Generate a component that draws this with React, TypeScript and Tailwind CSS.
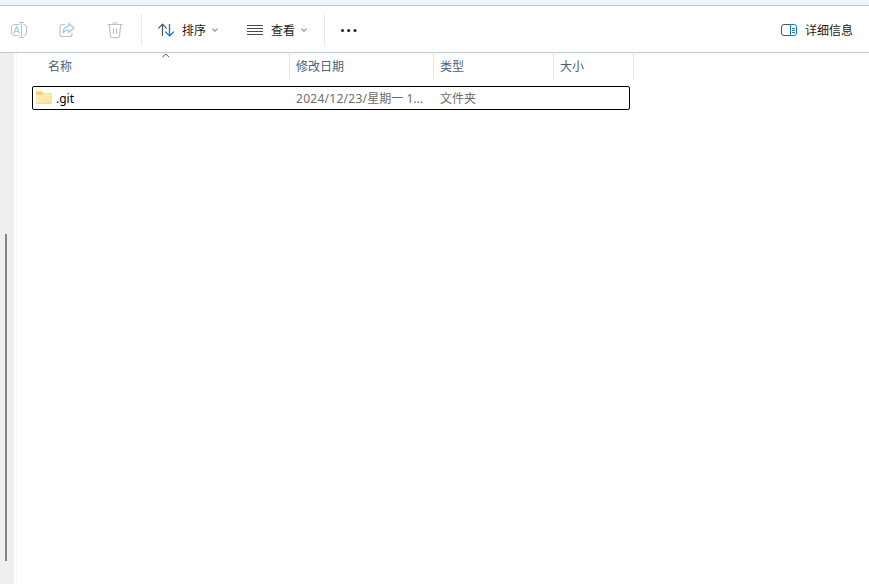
import type { ReactNode } from "react";

function RenameIcon() {
  return (
    <svg width="18" height="18" viewBox="0 0 18 18" fill="none">
      <path d="M9.500 3.500H4A2.500 2.500 0 0 0 1.500 6v6A2.500 2.500 0 0 0 4 14.500H9.500M13.500 3.500H14A2.500 2.500 0 0 1 16.500 6V12A2.500 2.500 0 0 1 14 14.500H13.500" stroke="#c3c3c3" />
      <path d="M3.700 12.500 6.500 5.500l2.800 7M4.700 10.500H8.400" stroke="#a0caec" strokeWidth="1.200" />
      <path d="M9 1.500h5M9 16.500h5M11.500 1.500V16.500" stroke="#a0caec" />
    </svg>
  );
}

function ShareIcon() {
  return (
    <svg width="18" height="18" viewBox="0 0 18 18" fill="none" strokeLinejoin="round">
      <path d="M7 3.500H4.500a2.500 2.500 0 0 0-2.500 2.500v7A2.500 2.500 0 0 0 4.500 15.500h7.500a2 2 0 0 0 2-2v-1.500" stroke="#c3c3c3" strokeWidth="1.200" />
      <path d="M10.800 2.500 15.900 7l-5.100 4.500V9C8.200 8.800 6.400 9.900 5 11.800c.2-4 2.200-6.400 5.800-6.700Z" stroke="#a0caec" strokeWidth="1.200" />
    </svg>
  );
}

function TrashIcon() {
  return (
    <svg width="18" height="18" viewBox="0 0 18 18" fill="none" stroke="#c0c0c0" strokeWidth="1.150" strokeLinecap="round">
      <path d="M2 3.500H16M7 3.500a2 2 0 0 1 4 0M3.300 3.800l1.200 11.200a1.600 1.600 0 0 0 1.600 1.500h5.800a1.600 1.600 0 0 0 1.600-1.500L14.700 3.800M7.500 7.500v5M10.500 7.500v5" />
    </svg>
  );
}

function SortIcon() {
  return (
    <svg width="18" height="16" viewBox="0 0 18 16" fill="none" strokeWidth="1.200" strokeLinecap="round" strokeLinejoin="round">
      <path d="M4.500 13.500V2.300M.700 6.200 4.500 2.200 8.300 6.200" stroke="#555" />
      <path d="M11.500 2.300v11.400M7.700 10l3.800 3.900 4-3.900" stroke="#0f7ddb" strokeWidth="1.350" />
    </svg>
  );
}

function LinesIcon() {
  return (
    <svg width="16" height="12" viewBox="0 0 16 12" stroke="#4b4b4b">
      <path d="M0 1.500h16M0 4.500h16M0 7.500h16M0 10.500h16" />
    </svg>
  );
}

function DetailsIcon() {
  return (
    <svg width="16" height="12" viewBox="0 0 16 12" fill="none">
      <path d="M9.500.500H3A2.500 2.500 0 0 0 .500 3v6A2.500 2.500 0 0 0 3 11.500h6.500" stroke="#555" />
      <path d="M9.500.500H13A2.500 2.500 0 0 1 15.500 3v6a2.500 2.500 0 0 1-2.500 2.500H9.500ZM11 4.500h3M11 6.500h3M11 8.500h3" stroke="#0f7ddb" />
    </svg>
  );
}

function Chevron() {
  return (
    <svg width="6" height="4" viewBox="0 0 6 4" fill="none" stroke="#8f8f8f" strokeWidth="1.150">
      <path d="m.4.600 2.600 2.500L5.600.600" />
    </svg>
  );
}

function FolderIcon() {
  return (
    <svg width="16" height="14" viewBox="0 0 16 14">
      <defs>
        <linearGradient id="folder" x1="0" y1="0" x2="1" y2="1">
          <stop stopColor="#fff0c3" />
          <stop offset="1" stopColor="#ffe092" />
        </linearGradient>
      </defs>
      <path d="M0 1.200Q0 .200 1 .200H5.500L7.500 2H15q1 0 1 1V7H0Z" fill="#f6cf75" />
      <path d="M0 4.500Q0 4 1 4H6L7.800 2.300H15q1 0 1 1V12q0 1-1 1H1q-1 0-1-1Z" fill="url(#folder)" />
      <path d="M.500 12.500q.2.500.8.500h13.400q.6 0 .8-.500Z" fill="#efcb77" />
    </svg>
  );
}

function Divider({ className }: { className: string }) {
  return <div className={`h-8 w-px shrink-0 bg-[#e9e9e9] ${className}`} />;
}

function Heading({ className, children }: { className: string; children: ReactNode }) {
  return <div className={`h-[27px] shrink-0 border-r border-[#e5e5e5] pt-[6px] ${className}`}>{children}</div>;
}

export default function App() {
  return (
    <div className="flex h-[584px] w-[869px] flex-col overflow-hidden bg-white font-['Noto_Sans','Noto_Sans_CJK_SC',sans-serif] text-xs">
      <div className="h-[6px] shrink-0 border-b border-[#b5cbd8] bg-[#eff4f9]" />
      <header className="flex h-[47px] shrink-0 items-center border-b border-[#b9ccd7] pt-[2px] text-[#191919]">
        <div className="ml-[10px]"><RenameIcon /></div>
        <div className="ml-[30px]"><ShareIcon /></div>
        <div className="ml-[30px]"><TrashIcon /></div>
        <Divider className="ml-[17px]" />
        <div className="ml-4"><SortIcon /></div>
        <span className="ml-[6px] w-6 pt-[2px] whitespace-nowrap">排序</span>
        <div className="ml-[6px]"><Chevron /></div>
        <div className="ml-[29px]"><LinesIcon /></div>
        <span className="ml-[8px] w-6 pt-[2px] whitespace-nowrap">查看</span>
        <div className="ml-[6px]"><Chevron /></div>
        <Divider className="ml-[17px]" />
        <div className="ml-4 pt-px">
          <svg width="16" height="5" viewBox="0 0 16 5" fill="#202020">
            <circle cx="1.500" cy="2.500" r="1.500" />
            <circle cx="7.700" cy="2.500" r="1.500" />
            <circle cx="14" cy="2.500" r="1.500" />
          </svg>
        </div>
        <div className="ml-auto"><DetailsIcon /></div>
        <span className="mr-[16px] ml-2 w-12 pt-[2px] whitespace-nowrap">详细信息</span>
      </header>
      <div className="flex min-h-0 flex-1">
        <aside className="w-[14px] shrink-0 bg-[#efefef] pt-[181px] pl-[5px]">
          <div className="h-[327px] w-[2px] bg-[#858585]" />
        </aside>
        <main className="ml-[2px] flex-1 border-l border-[#f5f5f5]">
          <div className="flex text-[#4c607a]">
            <Heading className="relative w-[273px] pl-[31px]">
              名称
              <svg className="absolute top-0 left-[145px]" width="8" height="5" viewBox="0 0 8 5" fill="none" stroke="#555">
                <path d="m.500 4.300 3.300-3.400 3.300 3.400" />
              </svg>
            </Heading>
            <Heading className="w-36 pl-[6px]">修改日期</Heading>
            <Heading className="w-[120px] pl-[6px]">类型</Heading>
            <Heading className="w-20 pl-[6px]">大小</Heading>
          </div>
          <div className="mt-[6px] ml-[15px] flex h-6 w-[598px] items-center rounded-[2px] border border-black pl-[3px] text-[#6d6d6d]">
            <FolderIcon />
            <span className="ml-1 w-[240px] pt-[2px] text-black">.git</span>
            <span className="w-36 pt-[2px] whitespace-nowrap">
              <span className="tracking-[0.27px]">2024/12/23/</span>星期一 1...
            </span>
            <span className="pt-[2px]">文件夹</span>
          </div>
        </main>
      </div>
    </div>
  );
}
